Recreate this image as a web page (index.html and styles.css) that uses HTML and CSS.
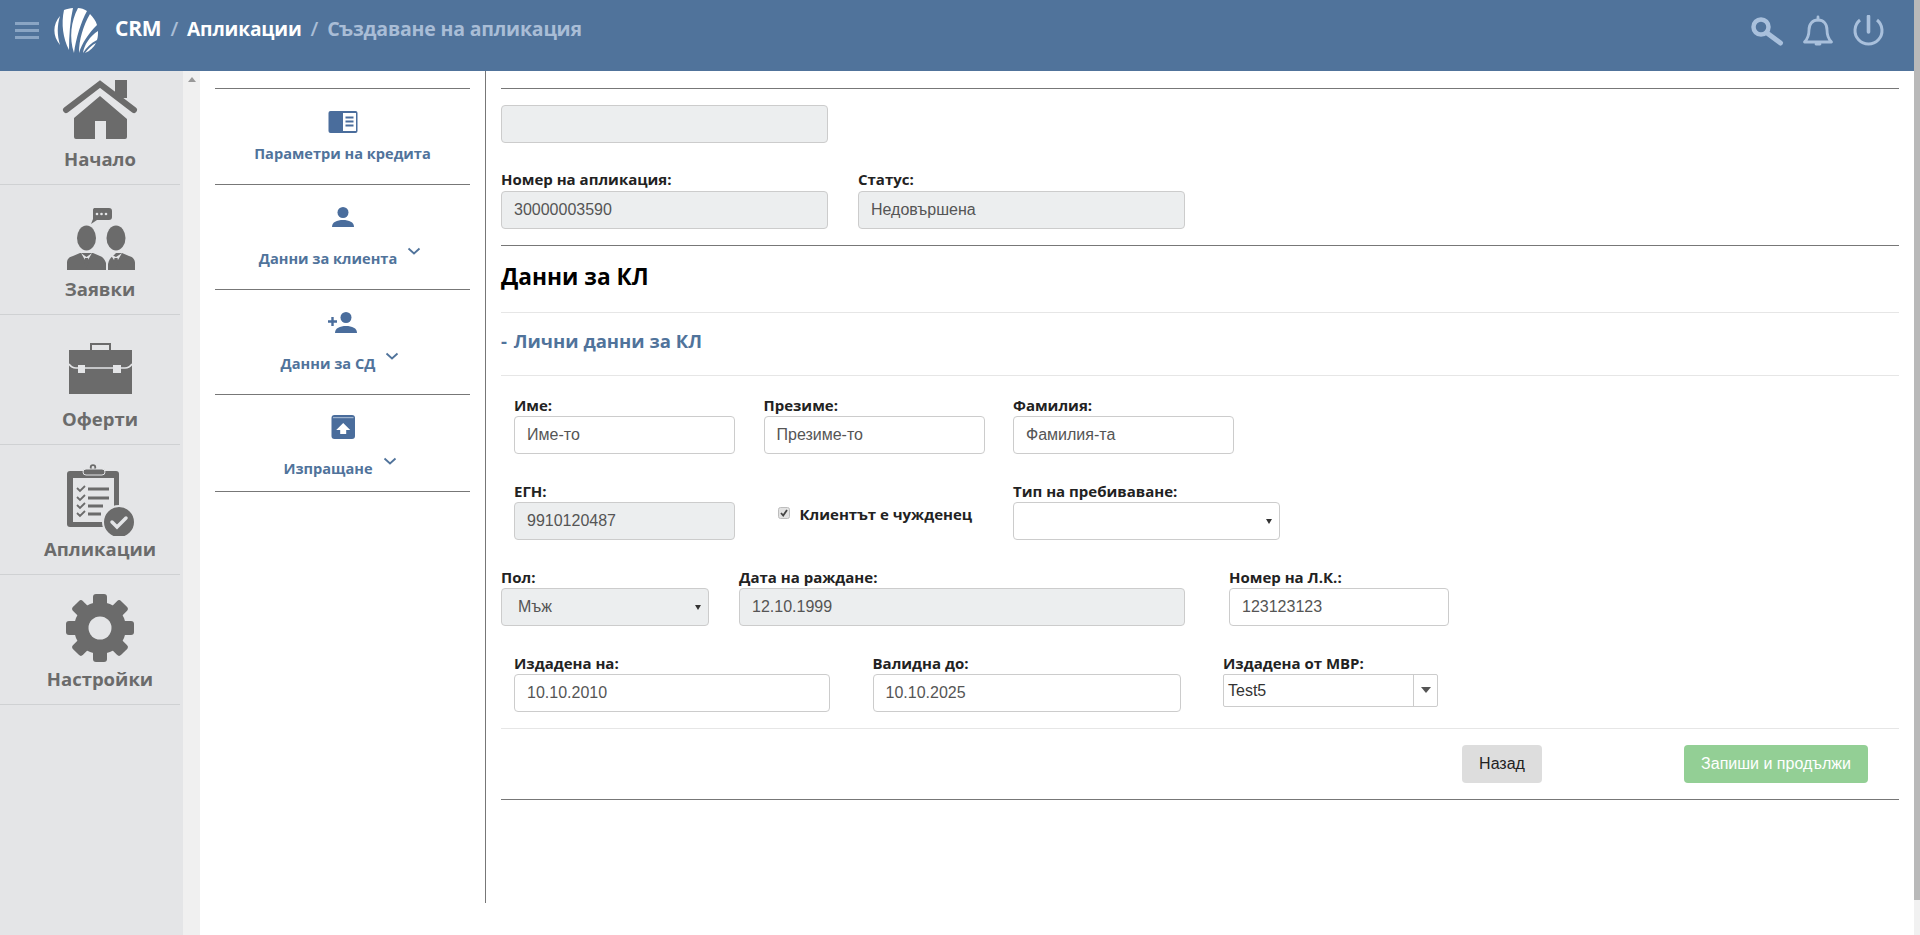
FILE: index.html
```html
<!DOCTYPE html>
<html lang="bg">
<head>
<meta charset="utf-8">
<title>Създаване на апликация</title>
<link rel="stylesheet" href="styles.css">
</head>
<body>
<div class="page">
  <div class="app">
    <header class="topbar">
      <div class="topbar-left">
        <div class="burger"><span></span><span></span><span></span></div>
        <svg class="logo" viewBox="0 0 44 46" fill="#fff">
          <path d="M6 9C-1 17-2 28 6 38 3 28 3 19 6 9z"/>
          <path d="M10 3c3-1 6-2 9-2-3 13-4 28-4 42C9 31 7 17 10 3z"/>
          <path d="M24 1c3 0 6 1 9 3C27 15 22 31 20 46 15 31 17 14 24 1z"/>
          <path d="M36 7c3 3 6 7 7 11-8 8-15 18-18 28 0-13 4-27 11-39z"/>
          <path d="M44 24c0 3 0 6-1 9-6 3-11 8-14 13 1-8 7-17 15-22z"/>
          <path d="M42 36c-2 4-6 8-11 10 3-4 7-8 11-10z"/>
        </svg>
        <nav class="crumbs">
          <span class="crumb crumb-brand">CRM</span><span class="crumb-sep">/</span><span class="crumb">Апликации</span><span class="crumb-sep">/</span><span class="crumb-current">Създаване на апликация</span>
        </nav>
      </div>
      <div class="topbar-right">
        <svg class="top-icon" width="34" height="32" viewBox="0 0 34 32" fill="none" stroke="#a9c0dc"><circle cx="11" cy="12" r="7.500" stroke-width="4.500"/><path d="M17 18l13.500 10" stroke-width="5" stroke-linecap="round"/></svg>
        <svg class="top-icon" width="32" height="32" viewBox="0 0 32 32" fill="none" stroke="#a9c0dc" stroke-width="2.800"><path d="M2.500 27c3-3 4.500-6 4.500-12 0-6 3.500-10 9-10s9 4 9 10c0 6 1.500 9 4.500 12z" stroke-linejoin="round"/><path d="M14 29h4M16 2v3" stroke-linecap="round"/></svg>
        <svg class="top-icon" width="32" height="32" viewBox="0 0 32 32" fill="none" stroke="#a9c0dc" stroke-width="3"><path d="M8 5A13.500 13.500 0 1 0 25 5"/><path d="M16.500 1.500V17" stroke-width="3.600" stroke-linecap="round"/></svg>
      </div>
    </header>
    <div class="body-row">
      <aside class="sidebar">
        <div class="side-items">
          <a class="side-item side-item-first">
            <svg class="side-icon" viewBox="0 0 80 72" fill="#6b6b6b"><path d="M6 36L40 10l34 26" fill="none" stroke="#6b6b6b" stroke-width="6" stroke-linecap="round"/><rect x="55" y="6" width="12" height="18"/><path d="M14 44l26-22 27 23v18a2 2 0 0 1-2 2H46V47H35v18H16a2 2 0 0 1-2-2z"/></svg>
            <span class="side-label">Начало</span>
          </a>
          <a class="side-item">
            <svg class="side-icon" viewBox="0 0 80 72" fill="#6b6b6b"><path d="M34 4h15a3 3 0 0 1 3 3v6a3 3 0 0 1-3 3H37l-6 4 2-5V7a3 3 0 0 1 1-3z"/><circle cx="37" cy="10" r="1.300" fill="#e4e5e7"/><circle cx="41.500" cy="10" r="1.300" fill="#e4e5e7"/><circle cx="46" cy="10" r="1.300" fill="#e4e5e7"/><ellipse cx="26.500" cy="34" rx="9.500" ry="12.500"/><ellipse cx="56" cy="34" rx="9.500" ry="12.500"/><path d="M7 66v-7c0-4 2-6 6-7l7-3h13l7 3c3 1 5 4 6 7v7z"/><path d="M48 66v-6c1-4 2-6 5-8l3-3h6l7 3c4 1 6 4 6 7v7z"/><path d="M21 49l5.500 4 5.500-4-4 7h-3z" fill="#e4e5e7"/><path d="M50 50l6 3 6-4-4 7h-4z" fill="#e4e5e7"/><path d="M25 54h3l1 5-2.500 5-2.500-5zM54.500 54h3l1 5-2.500 5-2.500-5z"/></svg>
            <span class="side-label">Заявки</span>
          </a>
          <a class="side-item">
            <svg class="side-icon" viewBox="0 0 80 72" fill="#6b6b6b"><rect x="9" y="16" width="63" height="44"/><rect x="31" y="10" width="19" height="7" fill="none" stroke="#6b6b6b" stroke-width="2"/><path d="M9 30c2 3 4 4 7 4h49c3 0 5-1 7-4" fill="none" stroke="#e4e5e7" stroke-width="1.500"/><rect x="18" y="31" width="7" height="8" fill="#e4e5e7"/><rect x="53" y="31" width="8" height="8" fill="#e4e5e7"/></svg>
            <span class="side-label">Оферти</span>
          </a>
          <a class="side-item">
            <svg class="side-icon" viewBox="0 0 80 72" fill="#6b6b6b"><rect x="7" y="7" width="52" height="56" rx="3"/><rect x="13" y="14" width="41" height="44" fill="#e4e5e7"/><circle cx="33" cy="3.500" r="2.300" fill="none" stroke="#6b6b6b" stroke-width="1.800"/><rect x="23" y="5" width="22" height="6" rx="3" stroke="#e4e5e7"/><path d="M17 24l3 3 5-5M17 33l3 3 5-5M17 41l3 3 5-5M17 49l3 3 5-5" fill="none" stroke="#6b6b6b" stroke-width="1.800"/><path d="M28 25h21M28 34h21M28 42h15M28 50h13" stroke="#6b6b6b" stroke-width="3"/><circle cx="59" cy="58" r="16" stroke="#e4e5e7" stroke-width="2"/><path d="M52 58l5 5 9-9" fill="none" stroke="#e4e5e7" stroke-width="3.500" stroke-linecap="round"/></svg>
            <span class="side-label">Апликации</span>
          </a>
          <a class="side-item">
            <svg class="side-icon" viewBox="0 0 80 72" fill="#6b6b6b"><circle cx="40" cy="34" r="26"/><rect x="33" y="0" width="14" height="68" rx="3"/><rect x="33" y="0" width="14" height="68" rx="3" transform="rotate(45 40 34)"/><rect x="33" y="0" width="14" height="68" rx="3" transform="rotate(90 40 34)"/><rect x="33" y="0" width="14" height="68" rx="3" transform="rotate(135 40 34)"/><circle cx="40" cy="34" r="11.500" fill="#e4e5e7"/></svg>
            <span class="side-label">Настройки</span>
          </a>
        </div>
        <div class="side-track"><span class="track-arrow"></span></div>
      </aside>

      <nav class="subnav">
        <div class="sub-item sub-item-plain">
          <svg class="sub-icon" width="30" height="24" viewBox="0 0 30 24"><rect x="0.500" y="0" width="29" height="22" rx="2" fill="#4a6d9c"/><rect x="15" y="2" width="13" height="18" fill="#fff"/><path d="M17.500 6.500h8M17.500 10.500h8M17.500 14.500h8" stroke="#4a6d9c" stroke-width="1.800"/></svg>
          <div class="sub-label-row"><span class="sub-label">Параметри на кредита</span></div>
        </div>
        <div class="sub-item">
          <svg class="sub-icon" width="30" height="24" viewBox="0 0 30 24" fill="#4a6d9c"><circle cx="15" cy="5.500" r="5.500"/><path d="M4 20c0-5 5-7 11-7s11 2 11 7z"/></svg>
          <div class="sub-label-row"><span class="sub-label">Данни за клиента</span><svg class="chevron" width="14" height="8" viewBox="0 0 14 8"><path d="M1.500 1.500L7 6.500l5.500-5" fill="none" stroke="#50739b" stroke-width="1.800"/></svg></div>
        </div>
        <div class="sub-item">
          <svg class="sub-icon" width="30" height="24" viewBox="0 0 30 24" fill="#4a6d9c"><circle cx="18" cy="5.500" r="5.500"/><path d="M7 21c0-5 5-7 11-7s11 2 11 7z"/><path d="M4.500 5v9M0 9.500h9" fill="none" stroke="#4a6d9c" stroke-width="2.400"/></svg>
          <div class="sub-label-row"><span class="sub-label">Данни за СД</span><svg class="chevron" width="14" height="8" viewBox="0 0 14 8"><path d="M1.500 1.500L7 6.500l5.500-5" fill="none" stroke="#50739b" stroke-width="1.800"/></svg></div>
        </div>
        <div class="sub-item sub-item-last">
          <svg class="sub-icon" width="30" height="24" viewBox="0 0 30 24"><rect x="3.500" y="0" width="23.500" height="24" rx="3" fill="#4a6d9c"/><rect x="5" y="2" width="20.500" height="1.200" fill="#9fb4cf"/><path d="M15.200 8l7 7h-4v4h-6v-4h-4z" fill="#fff"/></svg>
          <div class="sub-label-row"><span class="sub-label">Изпращане</span><svg class="chevron" width="14" height="8" viewBox="0 0 14 8"><path d="M1.500 1.500L7 6.500l5.500-5" fill="none" stroke="#50739b" stroke-width="1.800"/></svg></div>
        </div>
      </nav>

      <main class="content">
        <div class="rule"></div>
        <div class="input disabled w-327 blank"></div>
        <div class="form-row app-row">
          <div class="field w-327"><label class="label">Номер на апликация:</label><div class="input disabled">30000003590</div></div>
          <div class="field w-327"><label class="label">Статус:</label><div class="input disabled">Недовършена</div></div>
        </div>
        <div class="rule rule-after-app"></div>
        <h2 class="section-title">Данни за КЛ</h2>
        <div class="rule-light"></div>
        <h3 class="section-sub">- <span class="sub-text">Лични данни за КЛ</span></h3>
        <div class="rule-light"></div>

        <div class="form-row row-first pad">
          <div class="field w-221"><label class="label">Име:</label><div class="input">Име-то</div></div>
          <div class="field w-221"><label class="label">Презиме:</label><div class="input">Презиме-то</div></div>
          <div class="field w-221"><label class="label">Фамилия:</label><div class="input">Фамилия-та</div></div>
        </div>
        <div class="form-row row-next pad">
          <div class="field w-221"><label class="label">ЕГН:</label><div class="input disabled">9910120487</div></div>
          <div class="check w-221"><svg class="check-box" width="12" height="12" viewBox="0 0 12 12"><rect x="0.500" y="0.500" width="11" height="11" rx="2" fill="#e2e2e2" stroke="#bdbdbd"/><path d="M3 6l2.200 2.500L9 3" fill="none" stroke="#444" stroke-width="1.800"/></svg><span>Клиентът е чужденец</span></div>
          <div class="field w-267"><label class="label">Тип на пребиваване:</label><div class="input select"></div></div>
        </div>
        <div class="form-row row-next row-third">
          <div class="field w-208"><label class="label">Пол:</label><div class="input select disabled gender">Мъж</div></div>
          <div class="field w-446"><label class="label">Дата на раждане:</label><div class="input disabled">12.10.1999</div></div>
          <div class="field w-220"><label class="label">Номер на Л.К.:</label><div class="input">123123123</div></div>
        </div>
        <div class="form-row row-next pad row-fourth">
          <div class="field w-316"><label class="label">Издадена на:</label><div class="input">10.10.2010</div></div>
          <div class="field w-308"><label class="label">Валидна до:</label><div class="input">10.10.2025</div></div>
          <div class="field w-215"><label class="label">Издадена от МВР:</label><div class="combo"><span class="combo-text">Test5</span><span class="combo-btn"></span></div></div>
        </div>
        <div class="rule-light rule-actions"></div>
        <div class="actions">
          <button class="btn btn-back" type="button">Назад</button>
          <button class="btn btn-save" type="button">Запиши и продължи</button>
        </div>
        <div class="rule"></div>
      </main>
    </div>
  </div>
  <div class="scrollbar"><div class="scroll-thumb"></div></div>
</div>
</body>
</html>
```
FILE: styles.css
```css
* { box-sizing: border-box; }
html, body { margin: 0; height: 935px; overflow: hidden; background: #fff; }
body { font-family: "Open Sans", "Liberation Sans", sans-serif; color: #222; }

.page { display: flex; height: 935px; }
.app { flex: 1; min-width: 0; display: flex; flex-direction: column; }

.scrollbar { width: 6px; background: #f1f1f1; }
.scroll-thumb { height: 900px; background: #b9b9b9; }

/* top bar */
.topbar { height: 71px; flex: none; background: #50739b; display: flex; justify-content: space-between; padding: 7px 30px 0 15px; }
.topbar-left { display: flex; align-items: flex-start; }
.burger { width: 24px; display: flex; flex-direction: column; gap: 4.500px; margin-top: 15px; }
.burger span { height: 2.500px; background: #8aa5c4; }
.logo { width: 44px; height: 46px; margin-left: 15px; }
.crumbs { margin: 6px 0 0 17px; display: flex; align-items: baseline; font-size: 19.200px; line-height: 30px; font-weight: 700; color: #fff; letter-spacing: -0.2px; }
.crumb-brand { font-size: 21px; }
.crumb-sep { color: #a9bdd6; font-size: 20px; font-weight: 600; margin: 0 9px; }
.crumb-current { color: #a9bdd6; font-size: 19.500px; }
.topbar-right { display: flex; align-items: flex-start; gap: 18px; }
.top-icon { flex: none; margin-top: 8px; }

/* body */
.body-row { flex: 1; min-height: 0; display: flex; align-items: flex-start; }

.sidebar { width: 200px; height: 864px; flex: none; display: flex; }
.side-items { width: 183px; background: #e4e5e7; }
.side-track { width: 17px; background: #f0f0f0; display: flex; justify-content: center; padding-top: 6px; }
.track-arrow { width: 0; height: 0; border-left: 4px solid transparent; border-right: 4px solid transparent; border-bottom: 5px solid #999; }

.side-item { width: 180px; height: 130px; padding: 0 0 12px 20px; border-bottom: 1px solid #cfd1d3; display: flex; flex-direction: column; align-items: center; justify-content: flex-end; overflow: hidden; }
.side-item-first { height: 114px; }
.side-icon { width: 80px; height: 72px; flex: none; display: block; }
.side-label { height: 26px; line-height: 25px; font-size: 18.500px; font-weight: 700; color: #6b6b6b; white-space: nowrap; }

/* sub navigation */
.subnav { width: 286px; height: 832px; flex: none; padding: 17px 15px 0; border-right: 1px solid #777; }
.sub-item { height: 105px; padding-top: 22px; border-top: 1px solid #777; display: flex; flex-direction: column; align-items: center; }
.sub-item-plain { height: 96px; }
.sub-item-last { height: 98px; padding-top: 20px; border-bottom: 1px solid #777; }
.sub-icon { display: block; flex: none; }
.sub-label-row { display: flex; align-items: flex-start; margin-top: 16px; gap: 10px; }
.sub-item-plain .sub-label-row { margin-top: 7px; }
.sub-item-last .sub-label-row { margin-top: 18px; }
.sub-label { font-size: 14.600px; line-height: 22px; font-weight: 700; color: #50739b; white-space: nowrap; }
.chevron { margin-right: 5px; flex: none; }

/* main */
.content { flex: 1; min-width: 0; padding: 17px 15px 0; }
.rule { height: 1px; background: #777; }
.rule-light { height: 1px; background: #e6e6e6; }
.blank { margin-top: 16px; }
.w-327 { width: 327px; }
.w-221 { width: 221px; }
.w-220 { width: 220px; }
.w-267 { width: 267px; }
.w-208 { width: 208px; }
.w-446 { width: 446px; }
.w-316 { width: 316px; }
.w-308 { width: 308px; }
.w-215 { width: 215px; }

.form-row { display: flex; }
.pad { padding-left: 13px; }
.app-row { margin-top: 27px; gap: 30px; }
.app-row .label { height: 21px; }
.rule-after-app { margin-top: 16px; }
.row-first { margin-top: 20px; gap: 28.500px; }
.row-next { margin-top: 28px; }
.row-next.pad { gap: 28.500px; }
.row-third { gap: 30px; }
.row-third .w-220 { margin-left: 14px; }
.row-next.row-fourth { gap: 42.500px; }
.rule-actions { margin-top: 16px; }

.field { display: flex; flex-direction: column; flex: none; }
.label { display: block; height: 20px; line-height: 18px; font-size: 15px; font-weight: 700; color: #222; white-space: nowrap; }
.input { height: 38px; line-height: 36px; padding: 0 12px; border: 1px solid #ccc; border-radius: 4px; background: #fff; font-family: "Liberation Sans", Arial, sans-serif; font-size: 16px; color: #555; white-space: nowrap; }
.disabled { background: #eceeef; }
.select { position: relative; }
.select::after { content: ""; position: absolute; right: 7px; top: 16px; border-left: 3px solid transparent; border-right: 3px solid transparent; border-top: 5px solid #333; }
.gender { padding-left: 16px; }

.check { display: flex; align-items: center; flex: none; height: 38px; margin-top: 13px; padding-left: 14px; font-size: 15px; font-weight: 700; color: #222; white-space: nowrap; }
.check-box { flex: none; margin: -2px 10px 0 0; }

.combo { height: 33px; display: flex; border: 1px solid #ccc; border-radius: 2px; background: #fff; font-family: "Liberation Sans", Arial, sans-serif; font-size: 16px; color: #333; }
.combo-text { flex: 1; line-height: 31px; padding-left: 4px; }
.combo-btn { width: 24px; border-left: 1px solid #ccc; position: relative; }
.combo-btn::after { content: ""; position: absolute; left: 7px; top: 12px; border-left: 5px solid transparent; border-right: 5px solid transparent; border-top: 6px solid #555; }

.section-title { margin: 16px 0 20px; font-size: 22.700px; line-height: 30px; font-weight: 700; color: #000; }
.section-sub { margin: 13px 0 19px; font-size: 18.500px; line-height: 30px; font-weight: 700; color: #50739b; }
.sub-text { margin-left: 2px; }

.actions { display: flex; justify-content: flex-end; gap: 142px; margin: 16px 0; padding-right: 31px; }
.btn { height: 38px; border: 0; border-radius: 4px; font-family: "Liberation Sans", Arial, sans-serif; font-size: 16px; padding: 0; }
.btn-back { width: 80px; background: #ddd; color: #222; }
.btn-save { width: 184px; background: #93cf95; color: #fff; }
```
